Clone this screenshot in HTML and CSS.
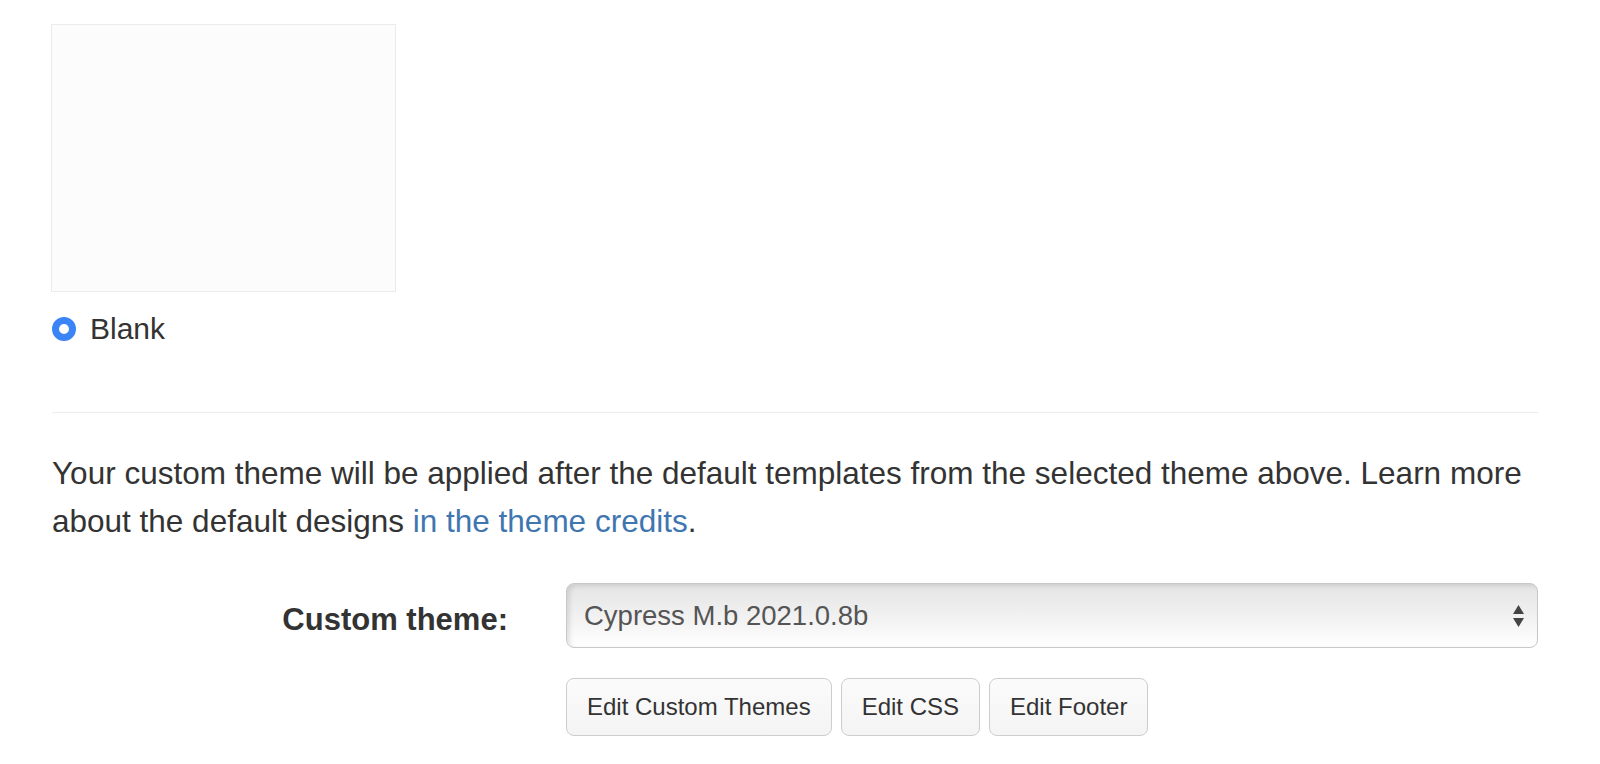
FILE: index.html
```html
<!DOCTYPE html>
<html lang="en">
<head>
<meta charset="utf-8">
<title>Theme settings</title>
<link rel="stylesheet" href="styles.css">
</head>
<body>
<div class="page">
  <div class="theme-choice">
    <div class="theme-thumb"></div>
    <label class="theme-radio">
      <span class="radio-dot"></span>
      <span class="radio-text">Blank</span>
    </label>
  </div>

  <hr class="divider">

  <p class="intro">Your custom theme will be applied after the default templates from the selected theme above. Learn more about the default designs <a href="#" class="link">in the theme credits</a>.</p>

  <div class="form-row">
    <div class="form-label">Custom theme:</div>
    <div class="form-field">
      <div class="select-wrap">
        <div class="select-box">Cypress M.b 2021.0.8b</div>
        <svg class="select-arrows" width="13" height="24" viewBox="0 0 13 24" aria-hidden="true">
          <path d="M6.5 1 L12 10 L1 10 Z" fill="#444"/>
          <path d="M1 14 L12 14 L6.5 23 Z" fill="#444"/>
        </svg>
      </div>
      <div class="btn-row">
        <button class="btn">Edit Custom Themes</button>
        <button class="btn">Edit CSS</button>
        <button class="btn">Edit Footer</button>
      </div>
    </div>
  </div>
</div>
</body>
</html>
```

FILE: styles.css
```css
html, body {
  margin: 0;
  padding: 0;
  background: #ffffff;
}

body {
  font-family: "Liberation Sans", Arial, sans-serif;
  color: #333333;
}

.page {
  padding: 24px 62px 0 52px;
}

.theme-choice {
  display: flex;
  flex-direction: column;
  align-items: flex-start;
}

.theme-thumb {
  box-sizing: border-box;
  width: 345px;
  height: 268px;
  margin-left: -1px;
  border: 1.5px solid #ebebeb;
  background: #fcfcfc;
}

.theme-radio {
  display: flex;
  align-items: center;
  gap: 14px;
  margin-top: 19px;
  height: 36px;
}

.radio-dot {
  box-sizing: border-box;
  width: 24px;
  height: 24px;
  border-radius: 50%;
  border: 7px solid #3a84f6;
  background: #ffffff;
}

.radio-text {
  font-size: 30px;
  line-height: 36px;
  color: #333333;
}

.divider {
  border: 0;
  border-top: 1.5px solid #ececec;
  margin: 65px 0 0 0;
  height: 0;
}

.intro {
  margin: 36px 0 0 0;
  font-size: 31.5px;
  line-height: 48px;
  color: #333333;
}

.link {
  color: #3f76b0;
  text-decoration: none;
}

.form-row {
  display: grid;
  grid-template-columns: 456px 1fr;
  column-gap: 58px;
  margin-top: 38px;
}

.form-label {
  font-size: 31px;
  font-weight: 700;
  text-align: right;
  height: 65px;
  line-height: 74px;
  color: #333333;
}

.form-field {
  display: flex;
  flex-direction: column;
  gap: 30px;
}

.select-wrap {
  position: relative;
}

.select-box {
  box-sizing: border-box;
  height: 65px;
  border: 1.5px solid #c8c8c8;
  border-radius: 8px;
  background: linear-gradient(to bottom, #e4e4e4 0%, #f2f2f2 55%, #ffffff 100%);
  box-shadow: inset 3px 2px 4px rgba(0, 0, 0, 0.10);
  padding: 0 17px;
  font-size: 27.5px;
  line-height: 64px;
  color: #555555;
}

.select-arrows {
  position: absolute;
  right: 13px;
  top: 21px;
}

.btn-row {
  display: flex;
  gap: 9px;
}

.btn {
  box-sizing: border-box;
  height: 58px;
  padding: 0 20px;
  border: 1.5px solid #cdcdcd;
  border-radius: 8px;
  background: linear-gradient(to bottom, #fbfbfb, #f4f4f4);
  font-family: "Liberation Sans", Arial, sans-serif;
  font-size: 24px;
  color: #333333;
}
```
